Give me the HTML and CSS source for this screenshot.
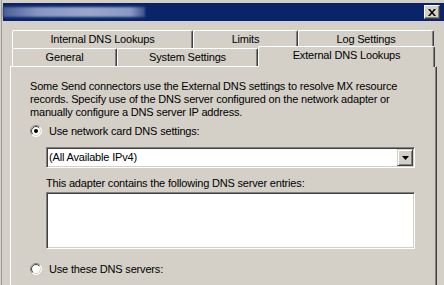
FILE: index.html
```html
<!DOCTYPE html>
<html>
<head>
  <title>External DNS Lookups</title>
  <link rel="stylesheet" href="styles.css">
</head>
<body>
  <div class="screen">
    <div class="behind"></div>
    <div class="window">
      <div class="titlebar">
        <div class="title-blur"></div>
        <div class="close">
          <svg width="8" height="7" viewBox="0 0 8 7"><path d="M0 0h2l2 2.5L6 0h2L5 3.5 8 7H6L4 4.5 2 7H0l3-3.5z" fill="#000"/></svg>
        </div>
      </div>

      <!-- tabs: back row first, front row touches the panel -->
      <div class="tabs">
        <div class="tab-row">
          <div class="tab w-internal">Internal DNS Lookups</div>
          <div class="tab w-limits">Limits</div>
          <div class="tab w-log">Log Settings</div>
        </div>
        <div class="tab-row front">
          <div class="tab w-general">General</div>
          <div class="tab w-system">System Settings</div>
          <div class="tab w-external active">External DNS Lookups</div>
        </div>
      </div>

      <div class="panel">
        <p class="desc">Some Send connectors use the External DNS settings to resolve MX resource records. Specify use of the DNS server configured on the network adapter or manually configure a DNS server IP address.</p>

        <div class="radio-row">
          <svg class="radio" width="12" height="12" viewBox="0 0 12 12">
            <defs>
              <linearGradient id="outer" x1="0" y1="0" x2="12" y2="12" gradientUnits="userSpaceOnUse">
                <stop offset="0.5" stop-color="#808080"/><stop offset="0.5" stop-color="#ffffff"/>
              </linearGradient>
              <linearGradient id="inner" x1="0" y1="0" x2="12" y2="12" gradientUnits="userSpaceOnUse">
                <stop offset="0.5" stop-color="#404040"/><stop offset="0.5" stop-color="#d4d0c8"/>
              </linearGradient>
            </defs>
            <circle cx="6" cy="6" r="5.5" fill="#fff" stroke="url(#outer)"/>
            <circle cx="6" cy="6" r="4.5" fill="#fff" stroke="url(#inner)"/>
            <circle cx="6" cy="6" r="2" fill="#000"/>
          </svg>
          <span>Use network card DNS settings:</span>
        </div>

        <div class="combo">
          <span class="combo-text">(All Available IPv4)</span>
          <div class="combo-btn">
            <svg width="7" height="4" viewBox="0 0 7 4"><path d="M0 0h7L3.5 4z" fill="#000"/></svg>
          </div>
        </div>

        <div class="label">This adapter contains the following DNS server entries:</div>
        <div class="list"></div>

        <div class="radio-row second">
          <svg class="radio" width="12" height="12" viewBox="0 0 12 12">
            <circle cx="6" cy="6" r="5.5" fill="#fff" stroke="url(#outer)"/>
            <circle cx="6" cy="6" r="4.5" fill="#fff" stroke="url(#inner)"/>
          </svg>
          <span>Use these DNS servers:</span>
        </div>
      </div>
    </div>
  </div>
</body>
</html>
```
FILE: styles.css
```css
body {
  margin: 0;
  background-color: #d4d0c8;
  font-family: "Liberation Sans", Arial, sans-serif;
  font-size: 11px;
  letter-spacing: -0.18px;
  color: #000;
  overflow: hidden;
}

.screen {
  display: flex;
  height: 285px;
}

/* edge of the window behind */
.behind {
  width: 3px;
  background: linear-gradient(to right, #d4d0c8 1px, #9a9a9a 1px, #9a9a9a 2px, #d4d0c8 2px);
}

.window {
  flex: 1;
  padding-top: 3px;
}

.titlebar {
  height: 18px;
  background-color: #0a246a;
  display: flex;
  align-items: center;
  justify-content: space-between;
}

.title-blur {
  width: 142px;
  height: 10px;
  background: linear-gradient(to right, #4a5f98, #8797c2 25%, #9aa7cb 60%, #8a99c2 90%, #3a508c);
  filter: blur(1px);
}

.close {
  width: 16px;
  height: 14px;
  box-sizing: border-box;
  margin-right: 4px;
  background-color: #d4d0c8;
  border: 1px solid;
  border-color: #fff #404040 #404040 #fff;
  box-shadow: inset -1px -1px #808080;
  display: flex;
  align-items: center;
  justify-content: center;
}

.tabs {
  margin-top: 9px;
  padding-left: 9px;
}

.tab-row {
  display: flex;
  align-items: flex-start;
}

.tab {
  height: 18px;
  box-sizing: border-box;
  padding-top: 2px;
  line-height: 13px;
  text-align: center;
  white-space: nowrap;
  background-color: #d4d0c8;
  border-top: 1px solid #fff;
  border-left: 1px solid #fff;
  border-right: 1px solid #404040;
  box-shadow: inset -1px 0 #808080;
  border-radius: 2px 2px 0 0;
}

.tab.active {
  height: 21px;
  margin: -2px 0 -1px;
  position: relative;
  z-index: 1;
}

.w-internal { width: 181px; }
.w-limits { width: 105px; }
.w-log { width: 136px; }
.w-general { width: 105px; }
.w-system { width: 141px; }
.w-external { width: 177px; }

.panel {
  margin-left: 7px;
  width: 427px;
  height: 219px;
  box-sizing: border-box;
  padding: 13px 0 0 19px;
  border-top: 1px solid #fff;
  border-left: 1px solid #fff;
  border-right: 1px solid #404040;
  box-shadow: inset -1px 0 #808080;
}

.desc {
  margin: 0;
  width: 400px;
  line-height: 13px;
}

.radio-row {
  display: flex;
  align-items: center;
  gap: 7px;
  height: 13px;
  margin-top: 5px;
}

.radio-row.second {
  margin-top: 13px;
}

.combo,
.list {
  margin-left: 16px;
  width: 369px;
  box-sizing: border-box;
  background-color: #fff;
  border: 1px solid;
  border-color: #808080 #fff #fff #808080;
  box-shadow: inset 1px 1px #404040, inset -1px -1px #d4d0c8;
}

.combo {
  margin-top: 10px;
  height: 21px;
  padding: 1px 1px 1px 2px;
  display: flex;
  align-items: center;
  justify-content: space-between;
}

.combo-text {
  line-height: 13px;
}

.combo-btn {
  width: 16px;
  height: 17px;
  box-sizing: border-box;
  background-color: #d4d0c8;
  border: 1px solid;
  border-color: #d4d0c8 #404040 #404040 #d4d0c8;
  box-shadow: inset 1px 1px #fff, inset -1px -1px #808080;
  display: flex;
  align-items: center;
  justify-content: center;
}

.label {
  margin: 9px 0 0 16px;
  line-height: 13px;
}

.list {
  margin-top: 2px;
  height: 57px;
}
```
